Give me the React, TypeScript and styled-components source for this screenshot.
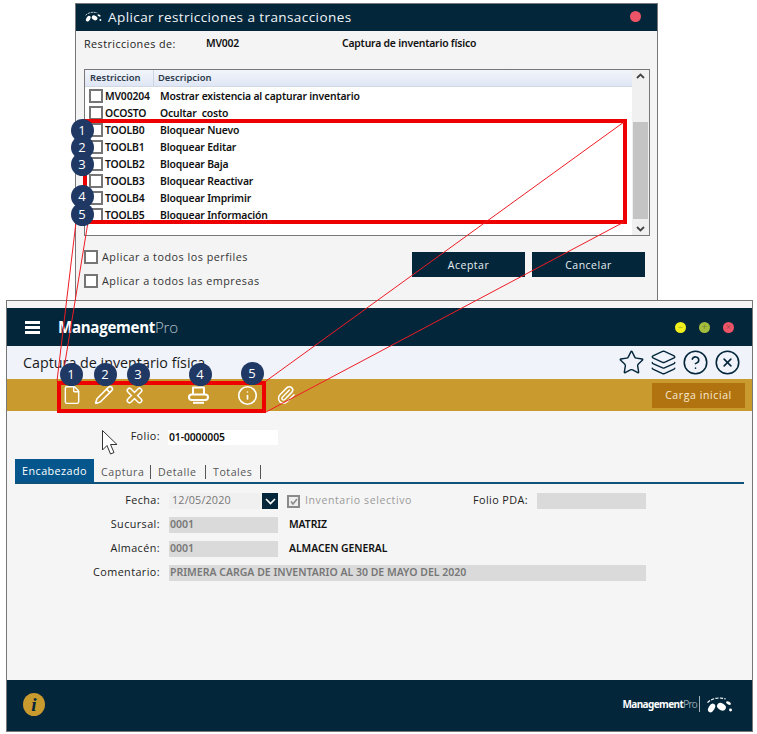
import React from "react";
import styled, { createGlobalStyle } from "styled-components";
import { CircleHelp, CircleX, File, Info, Layers, Paperclip, Pencil, Star } from "lucide-react";

const GlobalStyle = createGlobalStyle`
  html, body {
    margin: 0;
    padding: 0;
    background: #fff;
  }
  body {
    font-family: "Open Sans", "Noto Sans", sans-serif;
    color: #222;
  }
`;

const NAVY = "#03263b";
const GOLD = "#c99a2e";

const Page = styled.div`
  position: relative;
  width: 757px;
  height: 734px;
  overflow: hidden;
  padding-top: 3px;
  box-sizing: border-box;
`;

/* dialog de restricciones */
const Dialog = styled.section`
  margin-left: 75px;
  width: 583px;
  height: 297px;
  box-sizing: border-box;
  border: 1px solid #777;
  border-bottom: none;
  background: #f4f4f4;
  display: flex;
  flex-direction: column;
`;

const DialogTitle = styled.header`
  height: 27px;
  background: ${NAVY};
  display: flex;
  align-items: center;
  padding: 0 16px 2px 8px;
  box-sizing: border-box;
  color: #f2f5f7;
  font-size: 13.5px;
  letter-spacing: 0.42px;
  gap: 6px;
`;

const TitleText = styled.span`
  flex: 1;
`;

const Light = styled.span<{ $color: string }>`
  width: 11px;
  height: 11px;
  border-radius: 50%;
  background: ${(p) => p.$color};
  color: rgba(60, 60, 30, 0.45);
  font-family: "Liberation Sans", sans-serif;
  font-size: 9px;
  line-height: 11px;
  text-align: center;
`;

const InfoLine = styled.div`
  display: grid;
  grid-template-columns: 122px 136px 1fr;
  padding: 5px 0 0 8px;
  height: 34px;
  box-sizing: border-box;
  font-size: 10.8px;
  letter-spacing: 0.42px;
  line-height: 15px;
`;

const StrongText = styled.span`
  font-family: "Noto Sans", sans-serif;
  font-size: 10.4px;
  font-weight: 600;
  letter-spacing: -0.2px;
  color: #111;
`;

const SideName = styled(StrongText)`
  padding: 0 0 2px 2px;
  letter-spacing: -0.05px;
`;

const ListBox = styled.div`
  margin: 4px 0 0 8px;
  width: 566px;
  height: 167px;
  box-sizing: border-box;
  border: 1px solid #777;
  background: #fff;
  display: flex;
`;

const ListMain = styled.div`
  flex: 1;
`;

const ListHead = styled.div`
  height: 16px;
  display: grid;
  grid-template-columns: 69px 1fr;
  align-items: center;
  background: linear-gradient(#f2f5fb, #dfe6f4);
  border-bottom: 1px solid #d3d9e4;
  font-family: "Noto Sans", sans-serif;
  font-size: 9.4px;
  font-weight: 600;
  color: #2c3a4a;
`;

const HeadCell = styled.span`
  padding-left: 4px;
  line-height: 16px;
  &:first-child {
    padding-left: 5px;
    border-right: 1px solid #cfd5e0;
  }
`;

const Row = styled.div`
  height: 17px;
  display: grid;
  grid-template-columns: 16px 55px 1fr;
  align-items: center;
  padding-left: 4px;
`;

const Box = styled.span`
  width: 10px;
  height: 10px;
  border: 2px solid #757575;
  background: #fff;
  display: inline-flex;
  flex: none;
`;

const RowText = styled.span`
  font-family: "Noto Sans", sans-serif;
  font-size: 10.4px;
  font-weight: 600;
  letter-spacing: -0.17px;
  color: #111;
  white-space: pre;
`;

const ScrollBar = styled.div`
  width: 17px;
  background: #f0f0f0;
  display: flex;
  flex-direction: column;
  align-items: center;
  justify-content: space-between;
  padding: 3px 0;
  box-sizing: border-box;
  color: #444;
`;

const ScrollThumb = styled.div`
  width: 15px;
  height: 97px;
  margin-top: 36px;
  background: #c4c4c4;
`;

const DialogFoot = styled.div`
  display: flex;
  justify-content: space-between;
  padding: 14px 12px 0 8px;
`;

const CheckColumn = styled.div`
  display: flex;
  flex-direction: column;
  gap: 10px;
`;

const CheckLine = styled.label`
  display: flex;
  align-items: center;
  gap: 4px;
  font-size: 10.8px;
  letter-spacing: 0.5px;
  color: #333;
  height: 14px;
`;

const CheckText = styled.span`
  padding-bottom: 2px;
`;

const ButtonRow = styled.div`
  display: flex;
  gap: 7px;
  margin-top: 2px;
`;

const DialogButton = styled.button`
  width: 113px;
  height: 25px;
  border: none;
  padding: 0;
  background: ${NAVY};
  color: #e8edf0;
  font-family: "Open Sans", sans-serif;
  font-size: 10.5px;
  letter-spacing: 0.5px;
`;

/* ventana principal */
const AppWindow = styled.section`
  margin-left: 6px;
  width: 747px;
  height: 432px;
  box-sizing: border-box;
  border: 1px solid #777;
  padding-top: 7px;
  background: #f5f5f5;
  display: flex;
  flex-direction: column;
`;

const TopBar = styled.header`
  height: 38px;
  background: ${NAVY};
  display: flex;
  align-items: center;
  padding: 0 18px;
  box-sizing: border-box;
  gap: 18px;
`;

const Burger = styled.span`
  width: 15px;
  height: 13px;
  border-top: 3px solid #fff;
  border-bottom: 3px solid #fff;
  box-sizing: border-box;
  position: relative;
  &::after {
    content: "";
    position: absolute;
    left: 0;
    right: 0;
    top: 2px;
    height: 3px;
    background: #fff;
  }
`;

const Brand = styled.div`
  flex: 1;
  font-size: 15.1px;
  font-weight: 700;
  color: #fff;
  letter-spacing: -0.3px;
  span {
    font-weight: 300;
    color: #b9c4cc;
  }
`;

const Lights = styled.div`
  display: flex;
  gap: 13px;
  align-items: center;
`;

const SubBar = styled.div`
  height: 33px;
  background: #f0f3fa;
  display: flex;
  align-items: center;
  padding: 0 11px 0 16px;
  font-size: 14.3px;
  color: #1a1a1a;
`;

const SubTitle = styled.span`
  flex: 1;
`;

const SubIcons = styled.div`
  display: flex;
  gap: 5px;
  color: ${NAVY};
  align-items: center;
`;

const ToolBar = styled.div`
  height: 32px;
  background: ${GOLD};
  display: flex;
  align-items: center;
  padding: 0 7px 0 55px;
  color: #fff;
`;

const ToolSlot = styled.span<{ $width: number }>`
  width: ${(p) => p.$width}px;
  display: flex;
  align-items: center;
`;

const ToolSpacer = styled.span`
  flex: 1;
`;

const LoadButton = styled.button`
  width: 93px;
  height: 25px;
  border: none;
  padding: 0;
  background: #b1730f;
  color: #f6e9d0;
  font-family: "Open Sans", sans-serif;
  font-size: 10.5px;
  letter-spacing: 0.6px;
`;

const Content = styled.div`
  flex: 1;
  padding: 18px 8px 0;
  display: flex;
  flex-direction: column;
`;

const FolioLine = styled.div`
  display: grid;
  grid-template-columns: 115px 110px;
  column-gap: 8px;
  padding-left: 30px;
  align-items: center;
  height: 15px;
`;

const Label = styled.span`
  font-size: 10.8px;
  letter-spacing: 0.42px;
  line-height: 13px;
  padding-bottom: 4px;
  text-align: right;
  color: #222;
  white-space: nowrap;
`;

const FolioInput = styled.div`
  background: #fff;
  height: 15px;
  line-height: 15px;
  padding-left: 1px;
  font-family: "Noto Sans", sans-serif;
  font-size: 10.4px;
  font-weight: 600;
  letter-spacing: -0.1px;
  color: #111;
`;

const Tabs = styled.nav`
  margin-top: 15px;
  height: 25px;
  box-sizing: border-box;
  border-bottom: 2px solid #10527a;
  display: flex;
  align-items: flex-end;
`;

const ActiveTab = styled.span`
  width: 79px;
  height: 23px;
  line-height: 23px;
  text-align: center;
  background: #04568c;
  color: #fff;
  font-size: 10.8px;
  letter-spacing: 0.42px;
  margin-right: 7px;
`;

const Tab = styled.span<{ $width: number }>`
  width: ${(p) => p.$width}px;
  height: 14px;
  line-height: 14px;
  margin-bottom: 3px;
  margin-right: 7px;
  border-right: 1px solid #555;
  color: #555;
  font-size: 10.6px;
  letter-spacing: 0.55px;
`;

const Form = styled.div`
  display: grid;
  grid-template-columns: 145px 109px 1fr;
  grid-auto-rows: 16px;
  row-gap: 8px;
  column-gap: 9px;
  margin-top: 9px;
  align-items: center;
`;

const FieldValue = styled.div`
  background: #dadada;
  height: 16px;
  line-height: 15px;
  padding-left: 1px;
  font-family: "Noto Sans", sans-serif;
  font-size: 10.5px;
  font-weight: 600;
  color: #777;
  white-space: nowrap;
`;

const DateField = styled.div`
  display: flex;
  justify-content: space-between;
  align-items: flex-start;
  height: 16px;
  line-height: 14px;
  background: #f0f0f0;
  padding-left: 3px;
  color: #777;
  font-size: 10.8px;
  letter-spacing: 0.15px;
`;

const DropButton = styled.span`
  width: 16px;
  height: 16px;
  background: ${NAVY};
  display: flex;
  align-items: center;
  justify-content: center;
`;

const SideGroup = styled.div`
  display: flex;
  align-items: center;
`;

const GrayCheck = styled.span`
  width: 9px;
  height: 9px;
  border: 2px solid #8a8a8a;
  background: #eee;
  display: inline-flex;
  align-items: center;
  justify-content: center;
`;

const MutedLabel = styled.span`
  margin-left: 5px;
  width: 168px;
  padding-bottom: 3px;
  font-size: 10.5px;
  letter-spacing: 0.6px;
  color: #9a9a9a;
`;

const PdaField = styled.div`
  margin-left: 9px;
  width: 109px;
  height: 16px;
  background: #dadada;
`;

const WideField = styled(FieldValue)`
  grid-column: 2 / 4;
  width: 477px;
  box-sizing: border-box;
`;

const Footer = styled.footer`
  height: 49px;
  background: ${NAVY};
  display: flex;
  align-items: center;
  justify-content: space-between;
  padding: 0 19px 2px 16px;
`;

const InfoBadge = styled.span`
  width: 22px;
  height: 23px;
  border-radius: 50%;
  background: ${GOLD};
  color: ${NAVY};
  font-family: "Liberation Serif", serif;
  font-style: italic;
  font-weight: 700;
  font-size: 19px;
  line-height: 23px;
  text-align: center;
`;

const FooterBrand = styled.div`
  display: flex;
  align-items: center;
  gap: 2px;
  color: #fff;
  font-family: "Noto Sans", sans-serif;
  font-size: 10px;
  font-weight: 700;
  letter-spacing: -0.6px;
  span {
    font-weight: 300;
    color: #c5ced4;
  }
`;

const FooterRule = styled.i`
  width: 1px;
  height: 16px;
  background: #9fb0ba;
  margin: 0 3px 0 0;
`;

/* anotaciones encima de la captura */
const Overlay = styled.svg`
  position: absolute;
  left: 0;
  top: 0;
  pointer-events: none;
`;

const RedFrame = styled.div<{ $x: number; $y: number; $w: number; $h: number }>`
  position: absolute;
  left: ${(p) => p.$x}px;
  top: ${(p) => p.$y}px;
  width: ${(p) => p.$w}px;
  height: ${(p) => p.$h}px;
  box-sizing: border-box;
  border: 4px solid #ee0000;
`;

const Badge = styled.span<{ $x: number; $y: number }>`
  position: absolute;
  left: ${(p) => p.$x - 11.5}px;
  top: ${(p) => p.$y - 11.5}px;
  width: 23px;
  height: 23px;
  border-radius: 50%;
  background: #1f3864;
  color: #fff;
  font-size: 13px;
  line-height: 23px;
  text-align: center;
`;

const Cursor = styled.svg`
  position: absolute;
  left: 101px;
  top: 429px;
`;

const rows = [
  ["MV00204", "Mostrar existencia al capturar inventario"],
  ["OCOSTO", "Ocultar  costo"],
  ["TOOLB0", "Bloquear Nuevo"],
  ["TOOLB1", "Bloquear Editar"],
  ["TOOLB2", "Bloquear Baja"],
  ["TOOLB3", "Bloquear Reactivar"],
  ["TOOLB4", "Bloquear Imprimir"],
  ["TOOLB5", "Bloquear Información"],
];

const dialogBadges = [
  [82, 130],
  [82, 147],
  [82, 164],
  [82, 196],
  [82, 214],
];

const windowBadges = [
  [71, 374],
  [105, 374],
  [138, 374],
  [200, 374],
  [252, 373],
];

const BirdLogo = ({ width }: { width: number }) => (
  <svg width={width} height={width * 0.62} viewBox="0 0 34 21" fill="#fff">
    <ellipse cx="8" cy="14.5" rx="3.6" ry="5.8" transform="rotate(32 8 14.5)" />
    <ellipse cx="20" cy="13" rx="5.6" ry="4.2" transform="rotate(28 20 13)" />
    <circle cx="31" cy="17" r="1.8" />
    <ellipse cx="28.5" cy="8.5" rx="3.2" ry="1.7" transform="rotate(28 28.5 8.5)" />
    <path d="M3 8C8 3 16 1 25 3.5" fill="none" stroke="#fff" strokeWidth="1.4" strokeDasharray="4 1.5" />
  </svg>
);

const CrossIcon = () => (
  <svg width="17" height="17" viewBox="0 0 17 17" fill="none" strokeLinecap="round">
    <path d="M3.5 3.5 13.5 13.5M13.5 3.5 3.5 13.5" stroke="#fff" strokeWidth="6" />
    <path d="M3.5 3.5 13.5 13.5M13.5 3.5 3.5 13.5" stroke={GOLD} strokeWidth="3" />
  </svg>
);

const PrinterIcon = () => (
  <svg width="21" height="18" viewBox="0 0 21 18" fill="none" stroke="#fff" strokeWidth="2" strokeLinejoin="round">
    <path d="M5 8.5V1.5H16V8.5" />
    <rect x="1" y="8.5" width="19" height="5.5" rx="2.7" />
    <path d="M5 16.8H16" />
  </svg>
);

const Chevron = ({ up }: { up?: boolean }) => (
  <svg width="9" height="6" viewBox="0 0 9 6" fill="none" stroke="#444" strokeWidth="1.8">
    <path d={up ? "M1 5 4.5 1.5 8 5" : "M1 1 4.5 4.5 8 1"} />
  </svg>
);

export default function App() {
  return (
    <Page>
      <GlobalStyle />
      <Dialog>
        <DialogTitle>
          <BirdLogo width={18} />
          <TitleText>Aplicar restricciones a transacciones</TitleText>
          <Light $color="#ee5467" />
        </DialogTitle>
        <InfoLine>
          <span>Restricciones de:</span>
          <StrongText>MV002</StrongText>
          <StrongText>Captura de inventario físico</StrongText>
        </InfoLine>
        <ListBox>
          <ListMain>
            <ListHead>
              <HeadCell>Restriccion</HeadCell>
              <HeadCell>Descripcion</HeadCell>
            </ListHead>
            {rows.map(([code, text]) => (
              <Row key={code}>
                <Box />
                <RowText>{code}</RowText>
                <RowText>{text}</RowText>
              </Row>
            ))}
          </ListMain>
          <ScrollBar>
            <Chevron up />
            <ScrollThumb />
            <Chevron />
          </ScrollBar>
        </ListBox>
        <DialogFoot>
          <CheckColumn>
            <CheckLine>
              <Box />
              <CheckText>Aplicar a todos los perfiles</CheckText>
            </CheckLine>
            <CheckLine>
              <Box />
              <CheckText>Aplicar a todos las empresas</CheckText>
            </CheckLine>
          </CheckColumn>
          <ButtonRow>
            <DialogButton>Aceptar</DialogButton>
            <DialogButton>Cancelar</DialogButton>
          </ButtonRow>
        </DialogFoot>
      </Dialog>

      <AppWindow>
        <TopBar>
          <Burger />
          <Brand>
            Management<span>Pro</span>
          </Brand>
          <Lights>
            <Light $color="#f2f01c">−</Light>
            <Light $color="#a3bd3c">+</Light>
            <Light $color="#ee5467">×</Light>
          </Lights>
        </TopBar>
        <SubBar>
          <SubTitle>Captura de inventario física</SubTitle>
          <SubIcons>
            <Star size={27} strokeWidth={1.25} />
            <Layers size={27} strokeWidth={1.25} />
            <CircleHelp size={27} strokeWidth={1.4} />
            <CircleX size={27} strokeWidth={1.4} />
          </SubIcons>
        </SubBar>
        <ToolBar>
          <ToolSlot $width={32}>
            <File size={20} strokeWidth={1.7} />
          </ToolSlot>
          <ToolSlot $width={32}>
            <Pencil size={20} strokeWidth={1.9} />
          </ToolSlot>
          <ToolSlot $width={62}>
            <CrossIcon />
          </ToolSlot>
          <ToolSlot $width={49}>
            <PrinterIcon />
          </ToolSlot>
          <ToolSlot $width={39}>
            <Info size={21} strokeWidth={1.9} />
          </ToolSlot>
          <ToolSlot $width={22}>
            <Paperclip size={20} strokeWidth={1.8} />
          </ToolSlot>
          <ToolSpacer />
          <LoadButton>Carga inicial</LoadButton>
        </ToolBar>
        <Content>
          <FolioLine>
            <Label>Folio:</Label>
            <FolioInput>01-0000005</FolioInput>
          </FolioLine>
          <Tabs>
            <ActiveTab>Encabezado</ActiveTab>
            <Tab $width={49}>Captura</Tab>
            <Tab $width={47}>Detalle</Tab>
            <Tab $width={47}>Totales</Tab>
          </Tabs>
          <Form>
            <Label>Fecha:</Label>
            <DateField>
              12/05/2020
              <DropButton>
                <svg width="11" height="7" viewBox="0 0 11 7" fill="none" stroke="#fff" strokeWidth="1.6">
                  <path d="M1 1 5.5 5.5 10 1" />
                </svg>
              </DropButton>
            </DateField>
            <SideGroup>
              <GrayCheck>
                <svg width="8" height="7" viewBox="0 0 8 7" fill="none" stroke="#8a8a8a" strokeWidth="1.6">
                  <path d="M1 3.5 3 6 7 1" />
                </svg>
              </GrayCheck>
              <MutedLabel>Inventario selectivo</MutedLabel>
              <Label>Folio PDA:</Label>
              <PdaField />
            </SideGroup>
            <Label>Sucursal:</Label>
            <FieldValue>0001</FieldValue>
            <SideName>MATRIZ</SideName>
            <Label>Almacén:</Label>
            <FieldValue>0001</FieldValue>
            <SideName>ALMACEN GENERAL</SideName>
            <Label>Comentario:</Label>
            <WideField>PRIMERA CARGA DE INVENTARIO AL 30 DE MAYO DEL 2020</WideField>
          </Form>
        </Content>
        <Footer>
          <InfoBadge>i</InfoBadge>
          <FooterBrand>
            <div>
              Management<span>Pro</span>
            </div>
            <FooterRule />
            <BirdLogo width={28} />
          </FooterBrand>
        </Footer>
      </AppWindow>

      <RedFrame $x={83} $y={119} $w={544} $h={105} />
      <RedFrame $x={57} $y={381} $w={209} $h={32} />
      <Overlay width="757" height="734" fill="none" stroke="#ee1c25" strokeWidth="1">
        <line x1="76" y1="222" x2="57" y2="381" />
        <line x1="88" y1="222" x2="62" y2="381" />
        <line x1="624" y1="122" x2="266" y2="381" />
        <line x1="624" y1="222" x2="266" y2="412" />
      </Overlay>
      {dialogBadges.map(([x, y], i) => (
        <Badge key={`d${i}`} $x={x} $y={y}>
          {i + 1}
        </Badge>
      ))}
      {windowBadges.map(([x, y], i) => (
        <Badge key={`w${i}`} $x={x} $y={y}>
          {i + 1}
        </Badge>
      ))}
      <Cursor width="19" height="27" viewBox="0 0 19 27" fill="#fff" stroke="#333" strokeWidth="1">
        <path d="M1.5 1.5V21L6 16.5 9.5 25 13 23.5 9.5 15.5H16Z" />
      </Cursor>
    </Page>
  );
}
